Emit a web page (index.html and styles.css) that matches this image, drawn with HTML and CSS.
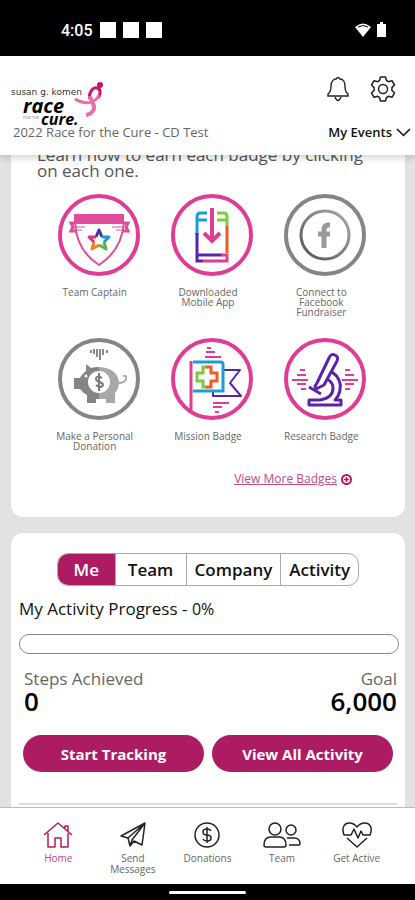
FILE: index.html
```html
<!DOCTYPE html>
<html lang="en">
<head>
    <meta charset="UTF-8">
    <meta name="viewport" content="width=device-width, initial-scale=1.0">
    <title>Race for the Cure</title>
    <link rel="stylesheet" href="styles.css">
</head>
<body>
    <div class="status-bar">
        <span class="time">4:05</span>
        <i class="square"></i>
        <i class="square"></i>
        <i class="square"></i>
        <svg class="status-icons" width="32" height="16" viewBox="0 0 32 16" fill="#fff">
            <path d="M0 5Q8-2 16 5L8 15Z"/>
            <path d="M3 5Q8 2 13 5" fill="none" stroke="#000"/>
            <path d="M22 2h3V0h3v2h3v13h-9z"/>
        </svg>
    </div>

    <header class="header">
        <div class="header-top">
            <svg class="logo" width="96" height="46" viewBox="0 0 96 46" role="img" aria-label="Susan G. Komen Race for the Cure">
                <text class="logo-name" x="0" y="13">susan g. komen</text>
                <text class="logo-word" x="12" y="31">race</text>
                <text class="logo-small" x="12" y="37">FOR THE</text>
                <text class="logo-word logo-cure" x="30" y="43">cure.</text>
                <g fill="none">
                    <path d="M79 17C77 11 82 5 86 6C91 7 89 14 87 16" stroke="#c2187a" stroke-width="3"/>
                    <path d="M88 13C84 22 73 23 64 17" stroke="#e66fa8" stroke-width="3"/>
                    <path d="M79 14C80 20 84 22 83 27Q81 32 75 33" stroke="#e66fa8" stroke-width="4"/>
                </g>
                <circle cx="89" cy="3" r="3" fill="#c2185b"/>
            </svg>
            <div class="header-icons">
                <button class="icon-btn" aria-label="Notifications">
                    <svg width="24" height="26" viewBox="0 0 24 26" fill="none" stroke="#222" stroke-width="1.4">
                        <path d="M2 20v-2Q5 16 5 10C5 5 8 3 10 3Q12 0 14 3C17 3 19 6 19 10Q19 16 22 18v2Z"/>
                        <path d="M9 21Q12 28 15 21"/>
                    </svg>
                </button>
                <button class="icon-btn" aria-label="Settings">
                    <svg width="26" height="26" viewBox="0 0 26 26" fill="none" stroke="#222" stroke-width="1.5" stroke-linejoin="round">
                        <path d="M10.500 1h5l1 3.500 2 1.200 3.500-1 2.500 4.300-2.600 2.600v2.800l2.600 2.600-2.500 4.300-3.500-1-2 1.200-1 3.500h-5l-1-3.500-2-1.200-3.500 1L1.500 17l2.600-2.600v-2.800L1.500 9 4 4.700l3.500 1 2-1.200Z"/>
                        <circle cx="13" cy="13" r="4.500"/>
                    </svg>
                </button>
            </div>
        </div>
        <div class="header-bottom">
            <span class="event-name">2022 Race for the Cure - CD Test</span>
            <button class="events-btn">My Events
                <svg width="15" height="9" viewBox="0 0 15 9" fill="none" stroke="#111" stroke-width="1.5"><path d="M1 1l6.500 6.500L14 1"/></svg>
            </button>
        </div>
    </header>

    <main class="content">
        <section class="card badges-card">
            <p class="intro">Learn how to earn each badge by clicking<br>on each one.</p>
            <div class="badges">
                <div class="badge">
                    <svg width="82" height="82" viewBox="0 0 82 82" fill="none">
                        <circle cx="41" cy="41" r="39" stroke="#de3c95" stroke-width="4"/>
                        <path d="M17 28Q18 56 41 71Q64 56 66 28" stroke="#e04b9c" stroke-width="2"/>
                        <path d="M16 20h50v10H16z" fill="#e04b9c"/>
                        <path d="M16 29h-3l2 4-2 4h5M66 29h4l-2 4 2 4h-5" stroke="#e04b9c" stroke-width="3"/>
                        <path d="M18 33h9M18 36h6M64 33h-10M64 36h-6" stroke="#e04b9c" stroke-width="1"/>
                        <g stroke-width="3" stroke-linejoin="round">
                            <path d="M38 43l3-7 3 7" stroke="#4632a0"/>
                            <path d="M44 43h7l-5 5" stroke="#2196d8"/>
                            <path d="M46 48l2 7-7-4" stroke="#55b846"/>
                            <path d="M41 51l-7 4 2-7" stroke="#f58220"/>
                            <path d="M36 48l-5-5h7" stroke="#d6348f"/>
                        </g>
                    </svg>
                    <span>Team Captain</span>
                </div>
                <div class="badge">
                    <svg width="82" height="82" viewBox="0 0 82 82" fill="none">
                        <circle cx="41" cy="41" r="39" stroke="#de3c95" stroke-width="4"/>
                        <g stroke-width="3">
                            <path d="M36 19h-7q-3 0-3 4v18M26 26h10" stroke="#1b9ed8"/>
                            <path d="M26 39v22M25 61h26" stroke="#5a24a8"/>
                            <path d="M46 19h7q3 0 3 4v10M46 26h10" stroke="#7ac943"/>
                            <path d="M56 32v27" stroke="#f15a24"/>
                            <path d="M26 61v6h6" stroke="#5a24a8"/>
                            <path d="M50 61h6v6H32" stroke="#de3c95"/>
                            <path d="M41 14v32M33 39l8 8 8-8" stroke="#de3c95" stroke-width="4"/>
                        </g>
                    </svg>
                    <span>Downloaded<br>Mobile App</span>
                </div>
                <div class="badge">
                    <svg width="82" height="82" viewBox="0 0 82 82" fill="none">
                        <defs>
                            <linearGradient id="ring" x1="0" y1="1" x2="1" y2="0">
                                <stop offset="0" stop-color="#555"/>
                                <stop offset="1" stop-color="#aaa"/>
                            </linearGradient>
                        </defs>
                        <circle cx="41" cy="41" r="39" stroke="#858585" stroke-width="4"/>
                        <circle cx="41" cy="41" r="24" stroke="url(#ring)" stroke-width="3"/>
                        <path d="M46 31h-2q-4 0-4 5v18M34 40h12" stroke="#999" stroke-width="5"/>
                    </svg>
                    <span>Connect to<br>Facebook<br>Fundraiser</span>
                </div>
                <div class="badge">
                    <svg width="82" height="82" viewBox="0 0 82 82" fill="none">
                        <circle cx="41" cy="41" r="39" stroke="#858585" stroke-width="4"/>
                        <path d="M33 12v3M36 11v5M39 11v8M42 11v11M45 11v6M49 12v3" stroke="#888" stroke-width="2"/>
                        <path d="M41 29q-5 0-8 1l-5-4v7q-5 4-6 7h-6v11h6q3 4 7 6v8h9v-4h3z" fill="#858585"/>
                        <path d="M41 29q18 1 20 15q0 7-4 11v10h-9v-4h-7z" fill="#a8a8a8"/>
                        <path d="M60 45q7 0 8-4t-3-3" stroke="#aaa" stroke-width="2"/>
                        <circle cx="28" cy="38" r="1.500" fill="#fff"/>
                        <circle cx="41" cy="44" r="11" fill="#fff"/>
                        <path d="M44 40q-6-3-6 1c0 4 7 2 7 6q-2 4-7 0M41 35v18" stroke="#777" stroke-width="2"/>
                    </svg>
                    <span>Make a Personal<br>Donation</span>
                </div>
                <div class="badge">
                    <svg width="82" height="82" viewBox="0 0 82 82" fill="none">
                        <circle cx="41" cy="41" r="39" stroke="#de3c95" stroke-width="4"/>
                        <path d="M36 10h4M35 14h9M34 19h16M42 65h16M42 69h9M44 74h4" stroke="#de3c95" stroke-width="2"/>
                        <path d="M53 32h16L59 45l11 13H42v-5" stroke="#5a24a8" stroke-width="2" stroke-linejoin="round"/>
                        <path d="M22 24h28q2 0 2 2v27H22" stroke="#1b9ed8" stroke-width="3"/>
                        <path d="M20 23v50" stroke="#de3c95" stroke-width="3"/>
                        <path d="M36 29h-4v6h-6v8h6v6h4" stroke="#7ac943" stroke-width="3"/>
                        <path d="M35 29h5v6h6v8h-6v6h-5" stroke="#f15a24" stroke-width="3"/>
                    </svg>
                    <span>Mission Badge</span>
                </div>
                <div class="badge">
                    <svg width="82" height="82" viewBox="0 0 82 82" fill="none">
                        <circle cx="41" cy="41" r="39" stroke="#de3c95" stroke-width="4"/>
                        <path d="M16 32h5M13 37h9M8 42h16M13 46h9M17 51h5M61 32h5M61 37h9M58 42h16M61 46h9M61 51h5" stroke="#de3c95" stroke-width="2"/>
                        <g stroke="#5a24a8" stroke-width="3" stroke-linejoin="round">
                            <path d="M33 45l12-25q2-5 6-3t2 6L40 47l-8 4-1-3z"/>
                            <path d="M48 34q10 7 8 18-1 6-5 10h6v5H25v-5h11q13-2 13-12 0-6-6-9"/>
                            <path d="M25 49l12 7"/>
                        </g>
                    </svg>
                    <span>Research Badge</span>
                </div>
            </div>
            <div class="more">
                <a href="#">View More Badges</a>
                <svg width="11" height="11" viewBox="0 0 11 11" fill="none" stroke="#ad1b62"><circle cx="5.500" cy="5.500" r="4.500" stroke-width="2"/><path d="M5.500 3v5M3 5.500h5" stroke-width="1.500"/></svg>
            </div>
        </section>

        <section class="card activity-card">
            <div class="tabs">
                <button class="tab active">Me</button>
                <button class="tab">Team</button>
                <button class="tab">Company</button>
                <button class="tab">Activity</button>
            </div>
            <h2>My Activity Progress - <span>0%</span></h2>
            <div class="progress" role="progressbar" aria-label="My Activity Progress" aria-valuenow="0" aria-valuemin="0" aria-valuemax="100"></div>
            <div class="stats">
                <div class="stat">Steps Achieved<strong>0</strong></div>
                <div class="stat goal">Goal<strong>6,000</strong></div>
            </div>
            <div class="actions">
                <button class="action-btn">Start Tracking</button>
                <button class="action-btn">View All Activity</button>
            </div>
            <hr>
        </section>
    </main>

    <nav class="bottom-nav">
        <a href="#" class="active">
            <svg width="30" height="28" viewBox="0 0 30 28"><path d="M1 14L15 2l14 12M5 12v14h7v-9h6v9h7V12M22 7V5h3v5"/></svg>
            Home
        </a>
        <a href="#">
            <svg width="30" height="28" viewBox="0 0 30 28"><path d="M3 15L27 2l-3 22-8-4-4 5-2-8zM27 2L10 17M27 2L14 19l-2 6"/></svg>
            Send<br>Messages
        </a>
        <a href="#">
            <svg width="30" height="28" viewBox="0 0 30 28"><circle cx="15" cy="14" r="12"/><path d="M19 10q-1-2-4-2-4 0-4 3t4 3 4 3-4 3q-3 0-4-2M15 6v16"/></svg>
            Donations
        </a>
        <a href="#">
            <svg width="38" height="28" viewBox="0 0 38 28"><circle cx="12" cy="8" r="6"/><circle cx="28" cy="9" r="5"/><path d="M1 24q0-8 7-8h8q7 0 7 8 0 2-2 2H3q-2 0-2-2zM24 17h7q6 0 6 6 0 1-1 1h-10"/></svg>
            Team
        </a>
        <a href="#">
            <svg width="30" height="28" viewBox="0 0 30 28"><path d="M2 14C-1 6 3 2 7 2q5 0 8 4 3-4 8-4c5 0 8 5 5 12h-7l-2-4-3 7-4-9-3 6zM5 17l10 9 10-9"/></svg>
            Get Active
        </a>
    </nav>
    <div class="gesture-bar"><i></i></div>
</body>
</html>
```

FILE: styles.css
```css
* {
    box-sizing: border-box;
}
body {
    margin: 0;
    height: 100vh;
    display: flex;
    flex-direction: column;
    background-color: #e2e2e2;
    color: #111;
    font-family: "Open Sans", "Noto Sans", sans-serif;
}
button {
    padding: 0;
    border: none;
    background: none;
    color: inherit;
    font-family: inherit;
    cursor: pointer;
}
svg {
    display: block;
    flex-shrink: 0;
}

/* phone status bar */
.status-bar {
    display: flex;
    align-items: center;
    gap: 7px;
    height: 56px;
    padding: 4px 28px 0 61px;
    background-color: #000;
    color: #fff;
}
.time {
    font-family: Roboto, sans-serif;
    font-size: 16px;
    font-weight: 500;
}
.square {
    width: 16px;
    height: 16px;
    background-color: #fff;
}
.status-icons {
    margin-left: auto;
}

/* header */
.header {
    position: relative;
    z-index: 1;
    height: 99px;
    padding-top: 20px;
    background-color: #fff;
    box-shadow: 0 2px 8px rgba(0,0,0,0.2);
}
.header-top {
    display: flex;
    justify-content: space-between;
    height: 46px;
    padding: 0 19px 0 11px;
}
.header-top .logo {
    margin-top: 6px;
}
.logo-name {
    font-family: "DejaVu Sans", sans-serif;
    font-size: 9px;
    fill: #333;
}
.logo-word {
    font-size: 20px;
    font-weight: bold;
    font-style: italic;
}
.logo-cure {
    font-size: 16px;
}
.logo-small {
    font-size: 4px;
    fill: #777;
}
.header-icons {
    display: flex;
    align-items: flex-start;
    gap: 20px;
}
.header-bottom {
    display: flex;
    justify-content: space-between;
    align-items: center;
    height: 20px;
    padding: 0 4px 0 13px;
}
.event-name {
    font-size: 13px;
    color: #666;
}
.events-btn {
    display: flex;
    align-items: center;
    gap: 4px;
    font-size: 13px;
    font-weight: 600;
}

/* scrolling content */
.content {
    flex: 1;
    min-height: 0;
    padding: 0 10px 0 11px;
    overflow: hidden;
}
.card {
    background-color: #fff;
    border-radius: 12px;
}
.badges-card {
    height: 376px;
    margin: -14px 0 16px;
    padding: 6px 23px 0 26px;
}
.intro {
    margin: 0;
    font-size: 17px;
    line-height: 16px;
    color: #555;
}
.badges {
    display: grid;
    grid-template-columns: repeat(3, 1fr);
    grid-template-rows: 144px 133px;
    margin: 15px 0 0 5px;
}
.badge {
    display: flex;
    flex-direction: column;
    align-items: center;
    gap: 11px;
    font-size: 10px;
    line-height: 10px;
    text-align: center;
    color: #666;
}
.badge span {
    padding-right: 8px;
}
.more {
    display: flex;
    justify-content: flex-end;
    align-items: center;
    gap: 4px;
    padding-right: 30px;
    font-size: 12px;
    line-height: 16px;
}
.more a {
    color: #c04a84;
}

.activity-card {
    padding: 20px 8px 16px;
}
.tabs {
    display: grid;
    grid-template-columns: 57fr 71fr 95fr 78fr;
    width: 80%;
    height: 33px;
    margin: 0 auto;
    border: 1px solid #aaa;
    border-radius: 11px;
    overflow: hidden;
}
.tab {
    border-left: 1px solid #aaa;
    font-size: 17px;
    font-weight: 600;
}
.tab.active {
    border-left: none;
    background-color: #ad1b62;
    color: #fff;
}
h2 {
    margin: 12px 0 14px;
    font-size: 17px;
    font-weight: 400;
    line-height: 22px;
}
h2 span {
    font-size: 16px;
}
.progress {
    height: 20px;
    margin-right: -2px;
    border: 1px solid #888;
    border-radius: 10px;
}
.stats {
    display: flex;
    justify-content: space-between;
    padding: 14px 0 0 5px;
}
.stat {
    font-size: 17px;
    line-height: 22px;
    color: #666;
}
.stat strong {
    display: block;
    font-size: 26px;
    font-weight: 600;
    line-height: 22px;
    color: #000;
}
.goal {
    text-align: right;
}
.actions {
    display: flex;
    gap: 8px;
    padding: 23px 4px 0;
}
.action-btn {
    flex: 1;
    height: 37px;
    border-radius: 19px;
    background-color: #ad1b62;
    color: #fff;
    font-size: 15px;
    font-weight: bold;
}
hr {
    margin: 31px 0 0;
    border: none;
    border-top: 2px solid #ddd;
}

/* bottom navigation */
.bottom-nav {
    display: flex;
    height: 77px;
    padding: 13px 21px 0;
    border-top: 1px solid #bbb;
    background-color: #fff;
}
.bottom-nav a {
    flex: 1;
    display: flex;
    flex-direction: column;
    align-items: center;
    font-size: 10px;
    line-height: 11px;
    text-align: center;
    text-decoration: none;
    color: #666;
}
.bottom-nav svg {
    margin-bottom: 4px;
    fill: none;
    stroke: #222;
    stroke-width: 1.5;
    stroke-linejoin: round;
}
.bottom-nav .active {
    color: #c0457f;
}
.bottom-nav .active svg {
    stroke: #ad1b62;
}
.gesture-bar {
    display: flex;
    justify-content: center;
    height: 16px;
    padding-top: 7px;
    background-color: #000;
}
.gesture-bar i {
    width: 77px;
    height: 3px;
    border-radius: 2px;
    background-color: #fff;
}
```
